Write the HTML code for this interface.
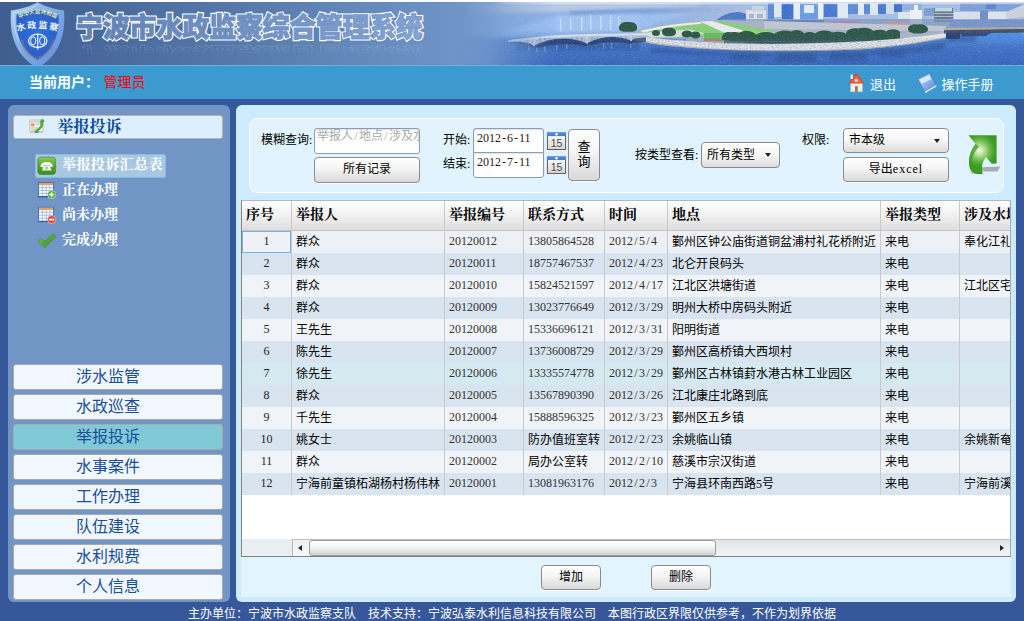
<!DOCTYPE html>
<html lang="zh-CN">
<head>
<meta charset="utf-8">
<title>宁波市水政监察综合管理系统</title>
<style>
*{box-sizing:border-box;margin:0;padding:0}
html,body{width:1024px;height:621px;overflow:hidden}
body{position:relative;background:#36589A;font-family:"Liberation Serif","Noto Sans CJK SC",sans-serif;font-size:12px;color:#000}
.abs{position:absolute}
/* ---------- banner ---------- */
#topline{left:0;top:0;width:1024px;height:2px;background:#fff}
#banner{left:0;top:2px;width:1024px;height:64px;overflow:hidden;background:linear-gradient(90deg,#3F5E8F 0,#446497 60px,#5274A7 200px,#6085B7 330px,#6E94C7 450px,#789ED0 520px)}
#banner svg{position:absolute;left:0;top:0}
#title,#title1,#title2{left:76px;font-family:"Liberation Sans","Noto Sans CJK SC",sans-serif;font-weight:900;font-size:27px;letter-spacing:-0.35px;line-height:36px;white-space:nowrap}
#title{top:8px;color:#fff;-webkit-text-stroke:3px #FAFCFF}
#title1{top:8px;color:transparent;-webkit-text-stroke:.5px #6E8EC0;background:linear-gradient(90deg,#6281B2 0,#7191C2 170px,#82A4D4 350px);-webkit-background-clip:text;background-clip:text}
#title2{top:33px;color:transparent;-webkit-text-stroke:1px rgba(255,255,255,.26);transform:scaleY(-0.7);transform-origin:50% 50%;-webkit-mask-image:linear-gradient(0deg,rgba(0,0,0,.9),rgba(0,0,0,0) 60%);mask-image:linear-gradient(0deg,rgba(0,0,0,.9),rgba(0,0,0,0) 60%)}
/* ---------- nav bar ---------- */
#nav{left:0;top:65px;width:1024px;height:34px;background:#3D9AD1;border-top:1px solid #69B1DB}
#nav .u{left:29px;top:6px;font:bold 14px/20px "Liberation Sans","Noto Sans CJK SC",sans-serif;color:#fff;white-space:nowrap}
#nav .n{left:103.5px;top:6px;font:14px/20px "Liberation Sans","Noto Sans CJK SC",sans-serif;color:#F00;white-space:nowrap}
#nav .l{top:8.5px;font:13px/20px "Liberation Sans","Noto Sans CJK SC",sans-serif;color:#fff;white-space:nowrap}
/* ---------- sidebar ---------- */
#side{left:8px;top:105px;width:222px;height:497px;background:#7196C5;border-radius:6px}
#stitle{left:5px;top:10px;width:210px;height:24px;background:#DDEEFF;border:1px solid #B9B2AC;border-radius:3px}
#stitle span{position:absolute;left:43.5px;top:0;font:bold 16px/22px "Liberation Serif","Noto Serif CJK SC",serif;color:#0C4A96;white-space:nowrap}
.mi{left:54px;font:bold 14px/20px "Liberation Serif","Noto Serif CJK SC",serif;color:#fff;white-space:nowrap}
#sel{left:27px;top:49px;width:131px;height:24px;background:#A8C8E2;border:1px solid #86BDE6;border-radius:2px}
.sb{left:5px;width:210px;height:26px;background:#F0F7FF;border:1px solid #ABA8A6;border-radius:3px;font:16px/24px "Liberation Sans","Noto Sans CJK SC",sans-serif;color:#1B4E98;white-space:nowrap;padding-left:62px}
.sb.on{background:#80CAD8}
/* ---------- main ---------- */
#main{left:236px;top:105px;width:780px;height:497px;background:#CCEBFC;border-radius:6px}
#inner{left:5px;top:95px;width:770px;height:397px;background:#E2F4FE}
#fs{left:13px;top:13px;width:755px;height:75px;background:#E0F3FE;border:1px solid #fff;border-radius:8px}
.lb{white-space:nowrap;line-height:14px;font-size:12px}
.inp{background:#fff;border:1px solid #8A9DB4;border-radius:3px;font-size:12px;line-height:14px;padding:2px 3px;white-space:nowrap;overflow:hidden;box-shadow:inset 0 1px 1px rgba(0,0,0,.12)}
.btn{background:linear-gradient(#FFFFFF 0,#F4F4F4 45%,#D9D9D9 100%);border:1px solid #8C8C8C;border-radius:4px;text-align:center;font-size:12px;white-space:nowrap;box-shadow:0 1px 0 rgba(255,255,255,.8)}
.cmb{background:linear-gradient(#FFFFFF 0,#F6F6F6 50%,#DCDCDC 100%);border:1px solid #8C8C8C;border-radius:4px;font-size:12px;white-space:nowrap;padding-left:5px}
.cmb i{position:absolute;right:8.5px;top:10px;width:0;height:0;border-left:3.5px solid transparent;border-right:3.5px solid transparent;border-top:4px solid #222}
/* ---------- grid ---------- */
#grid{left:5px;top:95px;width:770px;height:357px;background:#fff;border:1px solid #B4B8BC;border-right-color:#A4A8AC;border-left-color:#848484;border-bottom-color:#808080;overflow:hidden}
#gh{left:0;top:0;width:800px;height:30px;background:linear-gradient(#FDFDFD 0,#F1F1F1 50%,#DDDDDD 100%);border-bottom:1px solid #C6C6C6}
#gh span{position:absolute;top:0;height:29px;font:bold 14px/28px "Liberation Serif","Noto Serif CJK SC",serif;padding-left:4px;border-left:1px solid #C9C9C9;white-space:nowrap}
.r{left:0;width:800px;height:22px}
.r span{position:absolute;top:0;height:22px;line-height:22px;font-size:12px;padding-left:4px;border-left:1px solid #CACACA;white-space:nowrap;overflow:hidden}
.r span.c0{border-left:0;padding-left:0;text-align:center;color:#222;line-height:21px}
.r span.g{color:#333;line-height:21px}
.r span i,.inp i{display:inline-block;width:6px;text-align:center;font-style:normal}
.c0{left:0;width:49px}.c1{left:49px;width:153px}.c2{left:202px;width:79px}.c3{left:281px;width:81px}.c4{left:362px;width:63px}.c5{left:425px;width:213px}.c6{left:638px;width:79px}.c7{left:717px;width:82px}
.a{background:#F0F4F9}.b{background:#D8E4EF}.h{background:#D5E9F1}.s{background:#EDF0F5}
#hs{left:0;top:338px;width:768px;height:17px;background:linear-gradient(#DFE3E7 0,#E9EBED 40%,#F3F3F3 100%);border-top:1px solid #B9C1C9}
#hs .fz{left:0;top:-1px;width:50px;height:17px;background:#E9EEF3}
#hs .la{left:50px;top:0;width:18px;height:16px;background:linear-gradient(#EEF0F2,#F6F6F6);border-left:1px solid #B4B8BC}
#hs .la:after{content:"";position:absolute;left:5px;top:4.5px;border-top:3.5px solid transparent;border-bottom:3.5px solid transparent;border-right:4.5px solid #1E2A2A}
#hs .ra:after{content:"";position:absolute;right:6px;top:4.5px;border-top:3.5px solid transparent;border-bottom:3.5px solid transparent;border-left:4.5px solid #1E2A2A}
#hs .ra{right:0;top:0;width:18px;height:16px}
#hs .th{left:67px;top:0;width:407px;height:16px;border:1px solid #9A9EA2;border-radius:3px;background:linear-gradient(#FFFFFF 0,#F4F4F4 45%,#CFD3D6 100%)}
#foot{left:188px;top:606px;width:800px;text-align:left;word-spacing:-.35px;font:12px/16px "Liberation Sans","Noto Sans CJK SC",sans-serif;color:#fff;white-space:pre}
</style>
</head>
<body>
<div id="topline" class="abs"></div>
<div id="banner" class="abs">
<!--PHOTO_S--><svg class="abs" width="1024" height="64" viewBox="0 2 1024 64">
<defs>
<linearGradient id="fade" x1="0" x2="1" y1="0" y2="0"><stop offset="0" stop-color="#fff" stop-opacity="0"/><stop offset=".3" stop-color="#fff" stop-opacity=".18"/><stop offset=".6" stop-color="#fff" stop-opacity=".6"/><stop offset="1" stop-color="#fff" stop-opacity="1"/></linearGradient>
<mask id="pm" maskUnits="userSpaceOnUse" x="440" y="0" width="600" height="70"><rect x="456" y="0" width="100" height="70" fill="url(#fade)"/><rect x="555" y="0" width="480" height="70" fill="#fff"/></mask>
<linearGradient id="sky" x1="0" x2="0" y1="0" y2="1"><stop offset="0" stop-color="#A2BADC"/><stop offset=".22" stop-color="#8DAEDE"/><stop offset=".5" stop-color="#8AB0E6"/><stop offset="1" stop-color="#86AEE8"/></linearGradient>
<linearGradient id="wat" x1="0" x2="0" y1="0" y2="1"><stop offset="0" stop-color="#4C80D4"/><stop offset=".35" stop-color="#3B6CC4"/><stop offset="1" stop-color="#2E5CB0"/></linearGradient>
<linearGradient id="skf" gradientUnits="userSpaceOnUse" x1="650" x2="740" y1="0" y2="0"><stop offset="0" stop-color="#A4BCE0" stop-opacity="0"/><stop offset="1" stop-color="#A4BCE0" stop-opacity="1"/></linearGradient>
<filter id="b1" x="-5%" y="-20%" width="110%" height="140%"><feGaussianBlur stdDeviation="0.6"/></filter>
<filter id="b3" x="-5%" y="-30%" width="110%" height="160%"><feGaussianBlur stdDeviation="0 2.2"/></filter>
<filter id="b2" x="-5%" y="-30%" width="110%" height="160%"><feGaussianBlur stdDeviation="1.5"/></filter>
<filter id="nz" x="0" y="0" width="100%" height="100%"><feTurbulence type="fractalNoise" baseFrequency=".55 .9" numOctaves="2" seed="7" result="n"/><feColorMatrix in="n" type="matrix" values="0 0 0 0 1  0 0 0 0 1  0 0 0 0 1  1.6 0 0 0 -.62"/></filter>
<filter id="nz2" x="0" y="0" width="100%" height="100%"><feTurbulence type="fractalNoise" baseFrequency=".5 .8" numOctaves="2" seed="21" result="n"/><feColorMatrix in="n" type="matrix" values="0 0 0 0 .08  0 0 0 0 .16  0 0 0 0 .36  0 1.7 0 0 -.68"/></filter>
</defs>
<g mask="url(#pm)">
  <rect x="440" y="2" width="600" height="38" fill="url(#sky)"/>
  <rect x="440" y="38" width="600" height="40" fill="url(#wat)" filter="url(#b3)"/>
  <g filter="url(#b2)">
    <path d="M470 14 L700 8 L700 2 L470 2Z" fill="#B4C8E4"/>
    <path d="M500 32 L640 31 L660 22 L700 13 L560 15Z" fill="#9CC2F2" opacity=".75"/>
    <path d="M470 41 L560 39 L640 41 L640 47 L470 47Z" fill="#3F70C6" opacity=".75"/>
    <path d="M720 2 H1024 V30 H720Z" fill="#A0B8DC"/>
    <path d="M948 32 H1024 V43 H948Z" fill="#4C86DE"/>
  </g>
  <!-- far bank across upper river -->
  <g filter="url(#b1)">
    <path d="M570 11 L650 8.4 L700 7.2 L770 9 L770 12 L700 11 L650 12.4 L570 15Z" fill="#6E94D4" opacity=".7" filter="url(#b2)"/>
    <path d="M556 16 L640 13 L640 30 L556 32Z" fill="#A8C8F2" opacity=".45" filter="url(#b2)"/>
    <g fill="#E6F0FC" opacity=".5"><rect x="581" y="17" width="1.6" height="14"/><rect x="590" y="15" width="1.4" height="15"/><rect x="600" y="16" width="1.6" height="14"/><rect x="610" y="15" width="1.4" height="15"/><rect x="618" y="16" width="1.4" height="10"/><rect x="570" y="18" width="1.4" height="12"/><rect x="560" y="19" width="1.4" height="12"/></g>
  </g>
  <!-- skyline -->
  <g filter="url(#b1)">
    <path d="M650 2 H1024 V25 H650Z" fill="url(#skf)"/>
    <path d="M712 26 C716 18 726 12 740 12 L746 14 L746 25Z" fill="#4C76C4"/>
    <rect x="746" y="10" width="20" height="14" fill="#D8DFE8"/>
    <rect x="749" y="14" width="5" height="4" fill="#A8B4C6"/><rect x="757" y="14" width="6" height="4" fill="#A8B4C6"/>
    <rect x="752" y="6" width="12" height="5" fill="#C6D2E2"/>
    <rect x="768" y="3" width="6" height="16" fill="#5C88D6"/>
    <rect x="774" y="3" width="7" height="14" fill="#DCE6F4"/>
    <rect x="782" y="4" width="11" height="15" fill="#3C70CC"/>
    <rect x="794" y="3" width="6" height="17" fill="#E4ECF6"/>
    <rect x="800" y="4" width="18" height="15" fill="#6A98E2"/>
    <rect x="804" y="5" width="10" height="8" fill="#DCECFC"/>
    <rect x="818" y="3" width="5" height="17" fill="#E8EFF8"/>
    <rect x="824" y="4" width="13" height="13" fill="#4678D2"/>
    <rect x="838" y="3" width="10" height="15" fill="#DFE8F2"/>
    <rect x="848" y="4" width="10" height="10" fill="#5C8AD6"/>
    <rect x="858" y="3" width="6" height="12" fill="#E2EAF4"/><rect x="864" y="4" width="6" height="10" fill="#5A88D8"/>
    <rect x="870" y="3" width="8" height="12" fill="#DCE6F2"/>
    <rect x="878" y="4" width="8" height="10" fill="#4A7ACC"/>
    <rect x="886" y="3" width="8" height="11" fill="#D0DCEC"/>
    <rect x="894" y="4" width="8" height="8" fill="#3F70C8"/>
    <rect x="902" y="3" width="20" height="7" fill="#8CAEE0"/>
    <rect x="898" y="12" width="14" height="7" fill="#DCE4EC"/>
    <rect x="910" y="10" width="12" height="17" fill="#ECEFF2"/>
    <rect x="914" y="5" width="4" height="6" fill="#F0F3F6"/>
    <rect x="924" y="8" width="10" height="8" fill="#7C9CD0"/>
    <rect x="934" y="8" width="19" height="14" fill="#66768E"/>
    <rect x="935" y="8" width="17" height="3.4" fill="#B8DCDC"/>
    <path d="M934 13.5 h19 M934 16.5 h19 M934 19.5 h19" stroke="#C4CCD8" stroke-width=".8"/>
    <rect x="954" y="12" width="26" height="8" fill="#D8DEE8"/>
    <rect x="980" y="10" width="8" height="10" fill="#6C8CC4"/>
    <rect x="988" y="12" width="18" height="7" fill="#DDE3EB"/>
    <rect x="960" y="3" width="64" height="8" fill="#7C9ED6"/>
    <rect x="986" y="4" width="10" height="5" fill="#5C84CC"/>
    <path d="M1006 12 L1024 4.5 L1024 17 L1006 19Z" fill="#C8D0DC"/>
    <rect x="722" y="19" width="302" height="9" fill="#7C94BC" opacity=".7"/>
    <path d="M764 20 h60 v4 h-60Z" fill="#5C7CB8" opacity=".8"/>
    <path d="M950 20 h74 v7 h-74Z" fill="#6C8CC8" opacity=".7"/>
    <path d="M822 27 L831 21 L858 21 L868 27.5Z" fill="#A686B8"/>
    <path d="M836 27 L842 23.4 L860 23.4 L864 27Z" fill="#B494B6"/>
    <path d="M880 26 L886 22 L908 22 L912 26Z" fill="#B8989C"/>
    <rect x="870" y="25" width="38" height="5" fill="#BCC0CC"/>
    <rect x="824" y="27" width="40" height="3" fill="#C4C0C8"/>
  </g>
  <!-- land body -->
  <path d="M636 31 C646 27.5 660 24.5 676 22.6 C690 21 706 20 720 20 L946 26 L946 37 C925 42 900 46.5 860 49.5 C810 51.5 745 50.6 700 48 C670 46 650 43 636 39Z" fill="#A4B0C4" filter="url(#b1)"/>
  <path d="M764 21 L946 26 L946 31 L764 29Z" fill="#C4CAD4" opacity=".8" filter="url(#b1)"/>
  <g filter="url(#b1)">
    <path d="M640 31.5 L662 26 L690 23 L722 21.6 L738 24 L752 27 L772 30 L772 36 L700 37 L660 36Z" fill="#86CC78"/>
    <path d="M640 31 C655 27 675 23.6 700 22 L702 23.8 C680 25.4 660 28.6 644 32.6Z" fill="#E8ECF0"/>
    <path d="M700 21.5 L712 21 L742 30 L746 32 L724 32.6Z" fill="#E6EAEE"/>
    <path d="M640 33 L690 29.6 L704 33 L700 36 L652 37.5Z" fill="#E4E8EC" opacity=".8"/>
    <path d="M704 33 H772 V41 H704Z" fill="#68B464"/>
    <path d="M742 31 h30 v3 h-30Z" fill="#8ED082"/>
    <path d="M660 38.6 h26 v2 h-26Z" fill="#5C8CD8" opacity=".8"/>
    <path d="M704 39.4 h22 v1.8 h-22Z" fill="#C87458"/>
  </g>
  <!-- trees -->
  <g fill="#2C5446" filter="url(#b1)">
    <path d="M619 28 C619 23 624 21.4 629 22 C634 21.6 638 24.6 637 28.4 C637 31.6 632 32 628 31.8 C623 32.2 619 31 619 28Z"/>
    <ellipse cx="656" cy="33" rx="4" ry="3"/>
    <path d="M662 32 C662 28.4 666 27.4 669 27.8 C673 27.4 676 29.6 676 32.4 C676 35.4 672 36.4 669 36.2 C665 36.6 662 35 662 32Z"/>
    <ellipse cx="687" cy="34" rx="5.4" ry="3.6"/>
    <ellipse cx="695.5" cy="35" rx="5" ry="3.4"/>
    <path d="M722 40 C721 34 726 31 731 32.4 C735 31 738 33.4 740 32.4 C746 29.6 754 31.4 756 35 C760 31.4 770 31 774 34 C778 30.6 786 29.6 791 31.4 C797 28.6 803 31 804 33.4 C808 31.4 813 31.6 815 33.6 C819 29.6 828 29.6 832 32.4 C838 31 844 32 846 34 C846 30 852 27.6 858 28.6 C864 26.6 872 28 873 31 C878 29 884 29.4 886 31.4 C890 28 898 28.6 900 32 L900 40 L840 43.4 L760 44Z"/>
    <path d="M908 29 C908 25.4 913 23.6 918 24.4 C923 23.6 928 26 928 29.4 C928 32.6 923 33.6 918 33.4 C913 33.8 908 32.4 908 29Z"/>
  </g>
  <path d="M724 40.6 H900 L900 43 L724 45.6Z" fill="#43586A" opacity=".75" filter="url(#b1)"/>
  <!-- shoreline promenade -->
  <path d="M636 36 C670 40.4 700 42.6 740 43.6 C790 44.6 850 43.2 900 38.6 C925 36 940 34.2 947 32.6 L947 37.4 C930 41 905 45.6 860 49.2 C810 51.6 740 51 700 48.4 C670 46.4 650 43.6 636 40.4Z" fill="#E0E3E5" filter="url(#b1)"/>
  <path d="M640 41.4 C680 47.4 720 50 760 50.8 C820 51.4 870 49.4 910 44 L947 37.6" fill="none" stroke="#A09488" stroke-width=".9" opacity=".75"/>
  <!-- reflections on water -->
  <g filter="url(#b2)" opacity=".5">
    <path d="M650 47 C700 53 760 55 820 54 C870 53 910 49 945 41 L945 49 C900 57 700 59 650 52Z" fill="#264A8A"/>
    <path d="M730 53 h30 v8 h-30Z M776 53 h40 v9 h-40Z M830 52 h36 v9 h-36Z M880 49 h24 v8 h-24Z" fill="#1F3F78" opacity=".8"/>
    <path d="M516 43 H640 V50 H516Z" fill="#2B4C90"/>
    <path d="M946 36 h30 v6 h-30Z" fill="#28488A"/>
  </g>
  <g fill="#DCE8F8" opacity=".28"><rect x="528" y="44" width="1.6" height="7"/><rect x="536" y="44" width="1.6" height="8"/><rect x="544" y="45" width="1.6" height="7"/><rect x="556" y="44" width="1.6" height="6"/><rect x="566" y="43" width="1.6" height="6"/><rect x="603" y="43" width="1.4" height="6"/><rect x="611" y="43" width="1.4" height="6"/><rect x="630" y="43" width="1.4" height="5"/></g>
  <!-- left bridge -->
  <g filter="url(#b1)">
    <path d="M534 45.6 Q560.5 33 587 43.2 L587 46 Q560 41.5 537 48Z" fill="#223C6C" opacity=".9"/>
    <path d="M587 43.2 Q609 32.5 631 40.6 L631 44 Q609 40 589 45.6Z" fill="#223C6C" opacity=".9"/>
    <path d="M631 40.6 Q637 37 646 37.4 L646 42 L631 43.6Z" fill="#2B4468" opacity=".85"/>
    <path d="M510 41.6 Q526 40.8 534 45.6 L534 47.4 Q524 44 510 44Z" fill="#34507E" opacity=".6"/>
    <path d="M534 37.8 L587 34.8 L587 43.2 Q560.5 32 534 45.6Z" fill="#B2C0D4"/>
    <path d="M587 34.8 L631 33.9 L631 40.6 Q609 31.4 587 43.2Z" fill="#B2C0D4"/>
    <path d="M510 40 L534 37.8 L534 45.6 Q526 40.6 510 41.6Z" fill="#B8C6DA"/>
    <path d="M631 33.9 L646 33.6 L646 37.4 Q637 37 631 40.6Z" fill="#AAB8CC"/>
    <path d="M508 40.2 C530 38 545 35.6 560 35 C580 34 610 33.4 646 33.2 L646 35.6 C610 35.8 580 36.4 560 37.2 C545 37.8 530 40.2 508 42Z" fill="#D2DCE8"/>
    <path d="M540 38.4 v4 M545 38 v2.6 M550 37.6 v1.6 M572 37 v2 M577 37 v2.8 M582 37 v4 M592 36.6 v3.6 M597 36.4 v2.2 M621 36 v2.2 M626 36 v3.4 M520 40.4 v1.4 M527 39.8 v2.6" stroke="#7C8CA8" stroke-width=".9"/>
    <path d="M533 38 v8 h2 v-8Z M586 35 v8.6 h2 v-8.6Z M630 34 v7 h2 v-7Z" fill="#C4D0E0"/>
  </g>
  <!-- right bridge -->
  <g filter="url(#b1)">
    <path d="M944 29.6 L1024 28.6 L1024 32.6 L944 33.6Z" fill="#3C4E6C"/>
    <path d="M944 28.4 L1024 27.2 L1024 29 L944 30.2Z" fill="#B8A48C"/>
    <path d="M946 33 h14 v6 h-14Z" fill="#27406C"/>
    <path d="M960 33 L992 32.6 L986 36 L962 36.6Z" fill="#2F4878"/>
  </g>
  <rect x="500" y="2" width="524" height="2.2" fill="#EEF3FA" opacity=".55"/>
  <!-- texture -->
  <rect x="456" y="2" width="568" height="64" filter="url(#nz)" opacity=".16"/>
  <rect x="456" y="38" width="568" height="28" filter="url(#nz2)" opacity=".5"/>
</g>
</svg>
<!--PHOTO_E-->
<div id="title" class="abs">宁波市水政监察综合管理系统</div>
<div id="title1" class="abs">宁波市水政监察综合管理系统</div>
<div id="title2" class="abs">宁波市水政监察综合管理系统</div>
<!--SHIELD_S--><svg class="abs" style="left:8px;top:0" width="60" height="64" viewBox="8 2 60 64">
<defs>
<linearGradient id="sh1" x1="0" x2="1" y1="0" y2="1"><stop offset="0" stop-color="#B4D2F2"/><stop offset=".5" stop-color="#7FAAE6"/><stop offset="1" stop-color="#5C8ADC"/></linearGradient>
<radialGradient id="sh2" cx=".5" cy=".45" r=".6"><stop offset="0" stop-color="#2E72E0"/><stop offset="1" stop-color="#2A5CC0"/></radialGradient>
<path id="arc1" d="M18.5 19 Q37.5 8.5 57 19"/>
<path id="arc2" d="M17 31.5 Q37.5 25 58.5 31.5"/>
</defs>
<path d="M37.5 2.3 C30 6.5 20 9.5 11 10.5 C9.5 30 12.5 54 37.5 68 C62.5 54 65.5 30 64 10.5 C55 9.5 45 6.5 37.5 2.3Z" fill="url(#sh1)"/>
<path d="M37.5 9.5 C31 12.5 23 14 16.5 14.5 C15.5 31 19 49 37.5 60 C56 49 59.5 31 58.5 14.5 C52 14 44 12.5 37.5 9.5Z" fill="url(#sh2)"/>
<path d="M37.5 5 C31 9 22 11.5 13.5 12.3 C13.3 22 15 32 18 40" fill="none" stroke="#D6E8FA" stroke-width="1" opacity=".6"/>
<text font-family="'Liberation Sans','Noto Sans CJK SC',sans-serif" font-size="5.4" font-weight="700" fill="#DCE6A8" letter-spacing=".1"><textPath href="#arc1" startOffset="50%" text-anchor="middle">中华人民共和国</textPath></text>
<text font-family="'Liberation Sans','Noto Sans CJK SC',sans-serif" font-size="9" font-weight="700" fill="#EEF4FC" letter-spacing="1.6"><textPath href="#arc2" startOffset="51%" text-anchor="middle">水政监察</textPath></text>
<g fill="none" stroke="#F4F8FF" stroke-width="1.2">
<ellipse cx="37.7" cy="40.8" rx="9.2" ry="6.6"/>
<ellipse cx="33.2" cy="40.8" rx="2.6" ry="4" stroke-width="1"/>
<ellipse cx="42.2" cy="40.8" rx="2.6" ry="4" stroke-width="1"/>
<path d="M37.7 34.4 V49.6"/>
</g>
<path d="M22 40 C23 50 30 57 37.5 58.5 C45 57 52 50 53.5 39" fill="none" stroke="#9C8078" stroke-width="3" stroke-dasharray="1.8 .7" opacity=".55"/>
</svg>
<!--SHIELD_E-->
</div>

<div id="nav" class="abs">
  <div class="abs u">当前用户：</div>
  <div class="abs n">管理员</div>
  <!--NAVICONS_S--><svg class="abs" style="left:846px;top:5px" width="94" height="24" viewBox="846 71 94 24">
<defs>
<linearGradient id="gbk" x1="0" x2="1" y1="0" y2="1"><stop offset="0" stop-color="#D8E8FA"/><stop offset=".5" stop-color="#8CB4EC"/><stop offset="1" stop-color="#4C80D8"/></linearGradient>
</defs>
<!-- house -->
<path d="M850.5 81.5 H862.5 V91.8 H850.5Z" fill="#F1EFEA" stroke="#B9B2A6" stroke-width=".5"/>
<path d="M848.2 83.4 L856.3 73.2 L864.6 83.4Z" fill="#E2452C"/>
<path d="M850.6 82.4 L856.3 75.2 L862.2 82.4Z" fill="#F0683E"/>
<rect x="850.6" y="74.6" width="2.2" height="4.4" fill="#F4F1EC"/>
<rect x="855" y="86.2" width="2.8" height="5.6" fill="#A9744C"/>
<rect x="854.8" y="79.2" width="3" height="2.6" fill="#C8D8EC"/>
<!-- book -->
<path d="M917.8 79.2 L929.6 73.2 L936.2 85 L924.6 91.8Z" fill="url(#gbk)" stroke="#3C6CC4" stroke-width=".6"/>
<path d="M919.6 79.8 L929.2 75 L931.4 79 L921.6 83.8Z" fill="#EAF2FC" opacity=".8"/>
<path d="M924.6 91.8 L936.2 85 L936.6 86.4 L925.4 93Z" fill="#E8EEF6"/>
</svg>
<!--NAVICONS_E-->
  <div class="abs l" style="left:870px">退出</div>
  <div class="abs l" style="left:941.5px">操作手册</div>
</div>

<div id="side" class="abs">
  <div id="stitle" class="abs"><!--TITLEICON_S--><svg class="abs" style="left:14px;top:2px" width="18" height="18" viewBox="27 118 18 18">
<rect x="28.6" y="120" width="13.4" height="11.6" rx="1" fill="#F2F0EC" stroke="#B4B0A8" stroke-width=".7"/>
<rect x="29.4" y="120.6" width="11.8" height="2" fill="#D8D4CC"/>
<rect x="30" y="123.4" width="3.4" height="3" fill="#E89858"/>
<path d="M34.6 124 H40 M30 128 H40 M30 130 H38" stroke="#B8B4AC" stroke-width=".8"/>
<path d="M28.6 131.8 H42 V133 H28.6Z" fill="#C8C4BC"/>
<path d="M40.6 119.6 C42.4 119 43.4 120.4 43 121.6 L41.6 122.4 C42.6 125.6 40.6 129 37 130.4 L37.2 132 C36 133.2 34.2 132.8 33.8 131.4 C35.2 129.8 38.6 128.6 39.6 125.8 C40.2 124 39.6 122.6 39.4 121.4Z" fill="#4CB034" stroke="#2E8C1E" stroke-width=".5"/>
</svg>
<!--TITLEICON_E--><span>举报投诉</span></div>
  <div id="sel" class="abs"></div>
  <!--MENUICONS_S--><svg class="abs" style="left:28px;top:50px" width="22" height="96" viewBox="36 155 22 96">
<defs>
<linearGradient id="gph" x1="0" x2="0" y1="0" y2="1"><stop offset="0" stop-color="#8CCB5A"/><stop offset=".5" stop-color="#4FA52C"/><stop offset="1" stop-color="#3C8C1E"/></linearGradient>
<linearGradient id="gck" x1="0" x2="1" y1="0" y2="1"><stop offset="0" stop-color="#7CCB4A"/><stop offset="1" stop-color="#2F8C1C"/></linearGradient>
<g id="tbl">
<rect x="38.5" y="0.3" width="15" height="14.4" fill="#FDFEFF" stroke="#3F6CB4" stroke-width=".9"/>
<rect x="39" y="0.8" width="14" height="2.2" fill="#E8A05C"/>
<path d="M39 5.2 H53 M39 8.2 H53 M39 11.2 H53 M42.6 3 V14.5 M46.2 3 V14.5 M49.8 3 V14.5" stroke="#9DB8E0" stroke-width=".9" fill="none"/>
<path d="M38.5 14.4 H53.5" stroke="#2F5CA8" stroke-width="1.2"/>
</g>
</defs>
<rect x="37.8" y="157.2" width="17.8" height="17.2" rx="3" fill="url(#gph)" stroke="#3A8420" stroke-width=".6"/>
<path d="M40.6 167 C40.3 163.6 43 162 46.7 162 C50.4 162 53.1 163.6 52.8 167 L50.2 167 L49.9 165.3 L43.5 165.3 L43.2 167Z" fill="#F4F8F2"/>
<path d="M43.6 165.6 H49.8 L51.4 170.6 H42Z" fill="#EEF3EC"/>
<circle cx="46.7" cy="168" r="1.5" fill="#9CCB84"/>
<use href="#tbl" y="182.2"/>
<circle cx="51.6" cy="194.6" r="4" fill="#4CAC34" stroke="#DFF2D8" stroke-width=".6"/>
<path d="M49.2 194.6 H54 M51.6 192.2 V197" stroke="#fff" stroke-width="1.5"/>
<use href="#tbl" y="207"/>
<circle cx="51.6" cy="219.6" r="4" fill="#DC4A3C" stroke="#F6DAD6" stroke-width=".6"/>
<path d="M49.2 219.6 H54" stroke="#fff" stroke-width="1.7"/>
<path d="M38.2 241.2 L41 238.4 L44.6 241.8 L52.8 233.8 L55.8 236.4 L44.8 247.6Z" fill="url(#gck)" stroke="#2E7C1C" stroke-width=".5"/>
</svg>
<!--MENUICONS_E-->
  <div class="abs mi" style="top:50px;letter-spacing:.4px">举报投诉汇总表</div>
  <div class="abs mi" style="top:75px">正在办理</div>
  <div class="abs mi" style="top:100px">尚未办理</div>
  <div class="abs mi" style="top:125px">完成办理</div>

  <div class="abs sb" style="top:259px">涉水监管</div>
  <div class="abs sb" style="top:289px">水政巡查</div>
  <div class="abs sb on" style="top:319px">举报投诉</div>
  <div class="abs sb" style="top:349px">水事案件</div>
  <div class="abs sb" style="top:379px">工作办理</div>
  <div class="abs sb" style="top:409px">队伍建设</div>
  <div class="abs sb" style="top:439px">水利规费</div>
  <div class="abs sb" style="top:469px">个人信息</div>
</div>

<div id="main" class="abs">
  <div id="inner" class="abs"></div>
  <div id="fs" class="abs">
    <div class="abs lb" style="left:11px;top:14px">模糊查询:</div>
    <div class="abs inp" style="left:64px;top:9px;width:106px;height:26px;color:#A9A9A9;padding:0 2px">举报人<i>/</i>地点<i>/</i>涉及水域</div>
    <div class="abs btn" style="left:64px;top:38px;width:106px;height:26px;line-height:23px">所有记录</div>
    <div class="abs lb" style="left:193px;top:14px">开始:</div>
    <div class="abs lb" style="left:193px;top:38px">结束:</div>
    <div class="abs inp" style="left:223px;top:9px;width:71px;height:25px;color:#222;border-radius:3px 3px 0 0">2012<i>-</i>6<i>-</i>11</div>
    <div class="abs inp" style="left:223px;top:33px;width:71px;height:26px;color:#222;border-radius:0 0 3px 3px">2012<i>-</i>7<i>-</i>11</div>
    <!--CAL_S--><svg class="abs" style="left:295px;top:12px" width="24" height="46" viewBox="545 131 24 46">
<defs>
<linearGradient id="gcal" x1="0" x2="0" y1="0" y2="1"><stop offset="0" stop-color="#FFFFFF"/><stop offset="1" stop-color="#D6D6D6"/></linearGradient>
<g id="cal">
<rect x="547.4" y="0.4" width="18.2" height="16.8" fill="url(#gcal)" stroke="#5A4A44" stroke-width=".9"/>
<rect x="547" y="0" width="19" height="3.8" fill="#4A80D4"/>
<rect x="547" y="0" width="19" height="1" fill="#7CA6E4"/>
<circle cx="556.5" cy="2" r="1.2" fill="#fff"/>
<text x="556.6" y="14.6" text-anchor="middle" font-family="'Liberation Sans',sans-serif" font-size="10.5" fill="#4C4C4C">15</text>
</g>
</defs>
<use href="#cal" y="132.3"/>
<use href="#cal" y="156.2"/>
</svg>
<svg class="abs" style="left:715px;top:14px" width="38" height="46" viewBox="965 133 38 46">
<defs>
<radialGradient id="garr" gradientUnits="userSpaceOnUse" cx="979.5" cy="150.5" r="17"><stop offset="0" stop-color="#F4F6E6"/><stop offset=".16" stop-color="#D4ECBC"/><stop offset=".36" stop-color="#A4D888"/><stop offset=".6" stop-color="#6CBC4C"/><stop offset=".85" stop-color="#46A42A"/><stop offset="1" stop-color="#3A9A22"/></radialGradient>
</defs>
<path d="M981.6 167.2 L1000.2 166.4 L997.6 171.4 L982.6 171.6Z" fill="#A4ACB6"/>
<path d="M969.5 172.2 L982.6 172.6 L982 174.2 L971 174Z" fill="#B4BCC8" opacity=".7"/>
<path d="M968.5 135.2 L996.6 135.2 L996.6 163.4 L991.6 163.8 L986 157 C982.4 161.6 981 166.6 982.6 173.8 C978.4 174.6 974 173.6 971.4 171.4 C966.6 163 969.4 151.6 975.6 144 Z" fill="url(#garr)"/>
<path d="M975.6 144 C969.4 151.6 966.6 163 971.4 171.4 C970 162 972.8 152.6 979 146.4Z" fill="#3E9E26" opacity=".75"/>
<path d="M972.6 166 C975 171 978.6 173.4 982.6 173.8 C981.2 168.6 981.6 165.4 982.4 162.4 C979.4 165.4 976 166.6 972.6 166Z" fill="#3E9E26" opacity=".7"/>
</svg>
<!--CAL_E-->
    <div class="abs btn" style="left:318px;top:10px;width:32px;height:52px;line-height:15px;padding-top:9px;font-size:13px">查<br>询</div>
    <div class="abs lb" style="left:385px;top:29px">按类型查看:</div>
    <div class="abs cmb" style="left:451px;top:23px;width:79px;height:26px;line-height:25px">所有类型<i></i></div>
    <div class="abs lb" style="left:552px;top:14px">权限:</div>
    <div class="abs cmb" style="left:593px;top:9px;width:106px;height:25px;line-height:22px">市本级<i></i></div>
    <div class="abs btn" style="left:593px;top:38px;width:106px;height:25px;line-height:22px">导出<span style="letter-spacing:1px">excel</span></div>
    
  </div>

  <div id="grid" class="abs">
    <div id="gh" class="abs">
      <span class="c0" style="border-left:0">序号</span><span class="c1">举报人</span><span class="c2">举报编号</span><span class="c3">联系方式</span><span class="c4">时间</span><span class="c5">地点</span><span class="c6">举报类型</span><span class="c7">涉及水域</span>
    </div>
    <div class="abs r s" style="top:30px"><span class="c0" style="outline:1px solid #6FB3DE;outline-offset:-1px;background:#EEF1F5">1</span><span class="c1">群众</span><span class="c2 g">20120012</span><span class="c3 g">13805864528</span><span class="c4 g">2012<i>/</i>5<i>/</i>4</span><span class="c5">鄞州区钟公庙街道铜盆浦村礼花桥附近</span><span class="c6">来电</span><span class="c7">奉化江礼花桥段</span></div>
    <div class="abs r b" style="top:52px"><span class="c0">2</span><span class="c1">群众</span><span class="c2 g">20120011</span><span class="c3 g">18757467537</span><span class="c4 g">2012<i>/</i>4<i>/</i>23</span><span class="c5">北仑开良码头</span><span class="c6">来电</span><span class="c7"></span></div>
    <div class="abs r a" style="top:74px"><span class="c0">3</span><span class="c1">群众</span><span class="c2 g">20120010</span><span class="c3 g">15824521597</span><span class="c4 g">2012<i>/</i>4<i>/</i>17</span><span class="c5">江北区洪塘街道</span><span class="c6">来电</span><span class="c7">江北区宅前张河</span></div>
    <div class="abs r b" style="top:96px"><span class="c0">4</span><span class="c1">群众</span><span class="c2 g">20120009</span><span class="c3 g">13023776649</span><span class="c4 g">2012<i>/</i>3<i>/</i>29</span><span class="c5">明州大桥中房码头附近</span><span class="c6">来电</span><span class="c7"></span></div>
    <div class="abs r a" style="top:118px"><span class="c0">5</span><span class="c1">王先生</span><span class="c2 g">20120008</span><span class="c3 g">15336696121</span><span class="c4 g">2012<i>/</i>3<i>/</i>31</span><span class="c5">阳明街道</span><span class="c6">来电</span><span class="c7"></span></div>
    <div class="abs r b" style="top:140px"><span class="c0">6</span><span class="c1">陈先生</span><span class="c2 g">20120007</span><span class="c3 g">13736008729</span><span class="c4 g">2012<i>/</i>3<i>/</i>29</span><span class="c5">鄞州区高桥镇大西坝村</span><span class="c6">来电</span><span class="c7"></span></div>
    <div class="abs r h" style="top:162px"><span class="c0">7</span><span class="c1">徐先生</span><span class="c2 g">20120006</span><span class="c3 g">13335574778</span><span class="c4 g">2012<i>/</i>3<i>/</i>29</span><span class="c5">鄞州区古林镇葑水港古林工业园区</span><span class="c6">来电</span><span class="c7"></span></div>
    <div class="abs r b" style="top:184px"><span class="c0">8</span><span class="c1">群众</span><span class="c2 g">20120005</span><span class="c3 g">13567890390</span><span class="c4 g">2012<i>/</i>3<i>/</i>26</span><span class="c5">江北康庄北路到底</span><span class="c6">来电</span><span class="c7"></span></div>
    <div class="abs r a" style="top:206px"><span class="c0">9</span><span class="c1">千先生</span><span class="c2 g">20120004</span><span class="c3 g">15888596325</span><span class="c4 g">2012<i>/</i>3<i>/</i>23</span><span class="c5">鄞州区五乡镇</span><span class="c6">来电</span><span class="c7"></span></div>
    <div class="abs r b" style="top:228px"><span class="c0">10</span><span class="c1">姚女士</span><span class="c2 g">20120003</span><span class="c3">防办值班室转</span><span class="c4 g">2012<i>/</i>2<i>/</i>23</span><span class="c5">余姚临山镇</span><span class="c6">来电</span><span class="c7">余姚新奄河</span></div>
    <div class="abs r a" style="top:250px"><span class="c0">11</span><span class="c1">群众</span><span class="c2 g">20120002</span><span class="c3">局办公室转</span><span class="c4 g">2012<i>/</i>2<i>/</i>10</span><span class="c5">慈溪市宗汉街道</span><span class="c6">来电</span><span class="c7"></span></div>
    <div class="abs r b" style="top:272px"><span class="c0">12</span><span class="c1">宁海前童镇柘湖杨村杨伟林</span><span class="c2 g">20120001</span><span class="c3 g">13081963176</span><span class="c4 g">2012<i>/</i>2<i>/</i>3</span><span class="c5">宁海县环南西路5号</span><span class="c6">来电</span><span class="c7">宁海前溪</span></div>
    <div id="hs" class="abs"><div class="abs fz"></div><div class="abs la"></div><div class="abs th"></div><div class="abs ra"></div></div>
  </div>

  <div class="abs btn" style="left:305px;top:460px;width:60px;height:25px;line-height:22px">增加</div>
  <div class="abs btn" style="left:415px;top:460px;width:60px;height:25px;line-height:22px">删除</div>
</div>

<div id="foot" class="abs">主办单位：宁波市水政监察支队    技术支持：宁波弘泰水利信息科技有限公司    本图行政区界限仅供参考，不作为划界依据</div>
</body>
</html>
